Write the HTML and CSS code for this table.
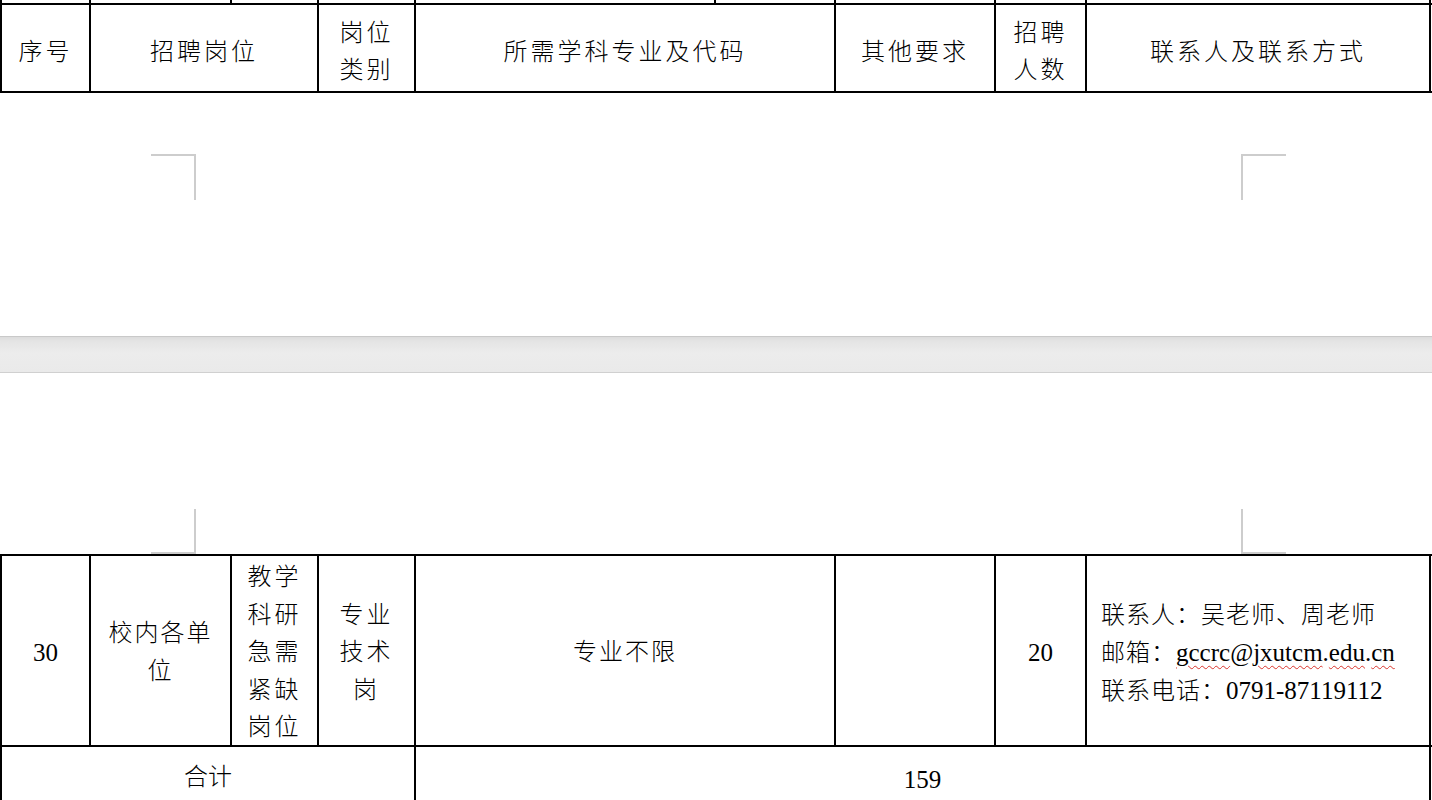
FILE: index.html
```html
<!DOCTYPE html>
<html lang="zh-CN">
<head>
<meta charset="utf-8">
<title>招聘岗位表</title>
<link rel="stylesheet" href="styles.css">
</head>
<body>
<div class="doc">
  <section class="page page-end">
    <div class="row strip">
      <div class="cell"></div><div class="cell"></div><div class="cell"></div><div class="cell"></div><div class="cell"></div><div class="cell"></div><div class="cell"></div><div class="cell"></div><div class="cell"></div>
    </div>
    <div class="row head">
      <div class="cell">序号</div>
      <div class="cell span2">招聘岗位</div>
      <div class="cell">岗位<br>类别</div>
      <div class="cell">所需学科专业及代码</div>
      <div class="cell">其他要求</div>
      <div class="cell">招聘<br>人数</div>
      <div class="cell">联系人及联系方式</div>
    </div>
    <div class="foot">
      <div class="marks">
        <span class="mark mark-tl"></span>
        <span class="mark mark-tr"></span>
      </div>
    </div>
  </section>

  <div class="page-gap"></div>

  <section class="page page-start">
    <div class="top">
      <div class="marks">
        <span class="mark mark-bl"></span>
        <span class="mark mark-br"></span>
      </div>
    </div>
    <div class="tbl">
      <div class="row body">
        <div class="cell num">30</div>
        <div class="cell unit">校内各单<br>位</div>
        <div class="cell narrow">教学<br>科研<br>急需<br>紧缺<br>岗位</div>
        <div class="cell narrow">专业<br>技术<br>岗</div>
        <div class="cell wide">专业不限</div>
        <div class="cell"></div>
        <div class="cell num">20</div>
        <div class="cell contact">
          <div>联系人：吴老师、周老师</div>
          <div>邮箱：<span class="latin"><span class="spell">gccrc</span>@<span class="spell">jxutcm</span>.<span class="spell">edu</span>.<span class="spell">cn</span></span></div>
          <div>联系电话：<span class="latin">0791-87119112</span></div>
        </div>
      </div>
      <div class="row total">
        <div class="cell span4 sum-label">合计</div>
        <div class="cell span4 num">159</div>
      </div>
    </div>
  </section>
</div>
</body>
</html>
```
FILE: styles.css
```css
html, body {
  margin: 0;
  padding: 0;
  background: #ffffff;
}
body {
  width: 1432px;
  height: 800px;
  overflow: hidden;
  font-family: "Liberation Serif", "Noto Sans CJK SC", serif;
  font-weight: 300;
  color: #000;
  font-size: 24px;
}
.doc {
  display: flex;
  flex-direction: column;
}
.row {
  display: grid;
  grid-template-columns: 89px 141px 87px 97px 420px 160px 91px 344px;
  border-left: 2px solid #000;
  border-bottom: 2px solid #000;
}
.cell {
  border-right: 2px solid #000;
  display: flex;
  align-items: center;
  justify-content: center;
  text-align: center;
  line-height: 37.5px;
  letter-spacing: 3px;
}
.span2 { grid-column: span 2; }
.span4 { grid-column: span 4; }

.strip {
  grid-template-columns: 89px 141px 87px 97px 300px 120px 160px 91px 344px;
  height: 3px;
}
.head {
  height: 86px;
}
.head .cell {
  padding-top: 8px;
  line-height: 37px;
}
.foot {
  height: 243px;
  padding-top: 61px;
  box-sizing: border-box;
}
.marks {
  display: flex;
  justify-content: space-between;
  padding: 0 146px 0 151px;
}
.mark {
  display: block;
  width: 45px;
  box-sizing: border-box;
  border-color: #cdcdcd;
  border-style: solid;
  border-width: 0;
}
.mark-tl { height: 46px; border-top-width: 2px; border-right-width: 2px; }
.mark-tr { height: 46px; border-top-width: 2px; border-left-width: 2px; }
.mark-bl { height: 45px; border-bottom-width: 2px; border-right-width: 2px; }
.mark-br { height: 45px; border-bottom-width: 2px; border-left-width: 2px; }

.page-gap {
  height: 35px;
  border-top: 1px solid #c9c9c9;
  border-bottom: 1px solid #d0d0d0;
  background: linear-gradient(#dcdcdc 0, #e4e4e4 4px, #ececec 45%, #eaeaea 100%);
}
.top {
  height: 181px;
  padding-top: 136px;
  box-sizing: border-box;
}
.tbl {
  border-top: 2px solid #000;
}
.body {
  height: 189px;
}
.body .cell {
  letter-spacing: 2px;
  padding-top: 3px;
}
.body .narrow { letter-spacing: 3px; }
.num {
  letter-spacing: 0;
  font-weight: 400;
  font-size: 25px;
}
.body .num { letter-spacing: 0; }
.contact {
  flex-direction: column;
  align-items: flex-start;
  justify-content: center;
  text-align: left;
  padding-left: 14px;
  line-height: 38px;
}
.body .contact { letter-spacing: 1px; }
.latin {
  letter-spacing: 0;
  font-weight: 400;
  font-size: 25px;
}
.spell {
  text-decoration: underline wavy #d9342b;
  text-decoration-thickness: 1px;
  text-underline-offset: 4px;
}
.total {
  height: 62px;
}
.total .cell {
  align-items: flex-start;
  padding-top: 12px;
}
.total .num { padding-top: 14px; }
.sum-label { letter-spacing: 0; }
```
